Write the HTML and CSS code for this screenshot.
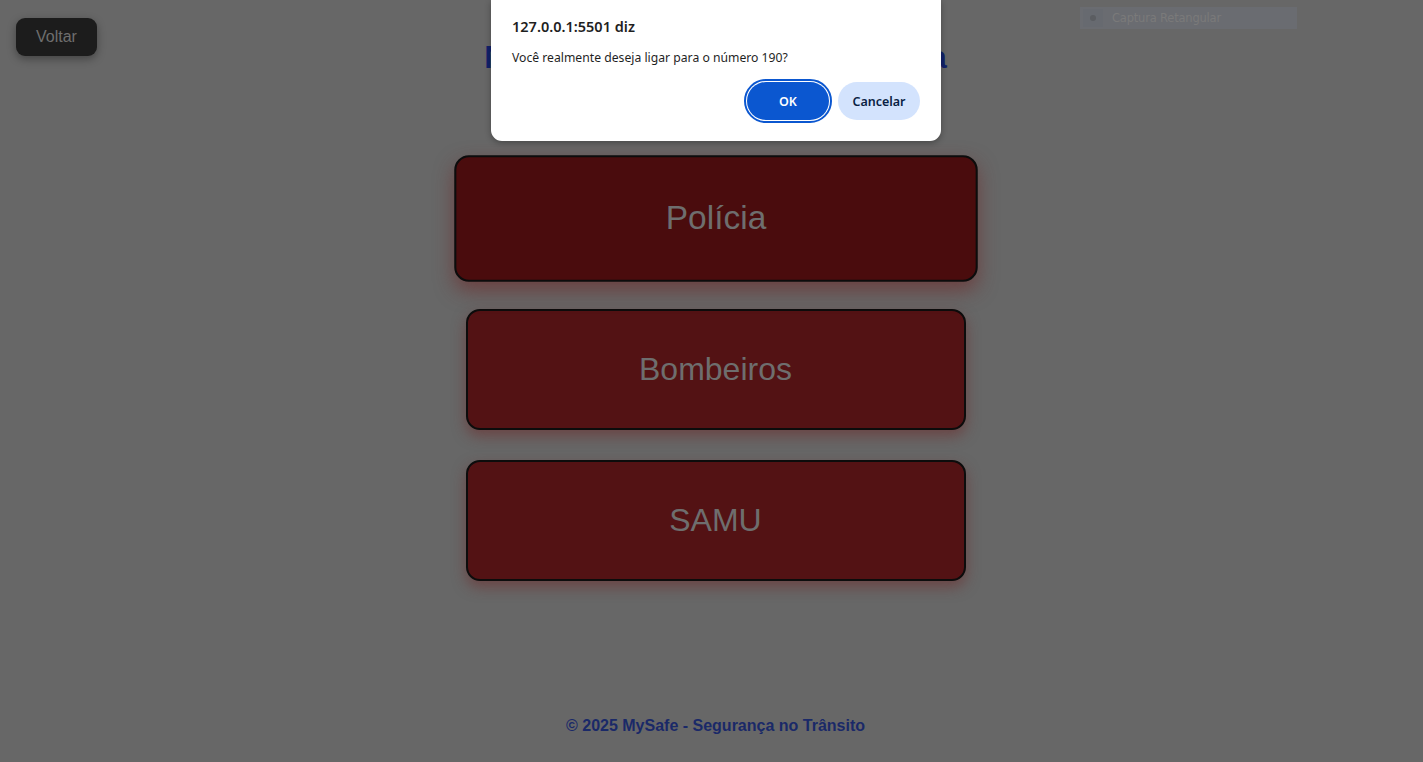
FILE: index.html
```html
<!DOCTYPE html>
<html lang="pt-BR">
<head>
<meta charset="utf-8">
<title>MySafe - Emergência</title>
<link rel="stylesheet" href="styles.css">
</head>
<body>
<div class="page">
  <button class="back-btn">Voltar</button>
  <main class="content">
    <h1 class="title">Números Úteis de Emergência</h1>
    <div class="actions">
      <button class="call-btn is-hover">Polícia</button>
      <button class="call-btn">Bombeiros</button>
      <button class="call-btn">SAMU</button>
    </div>
  </main>
  <footer class="footer">© 2025 MySafe - Segurança no Trânsito</footer>
</div>

<div class="capture-pill">
  <span class="capture-icon"><span class="capture-dot"></span></span>
  <span class="capture-label">Captura Retangular</span>
</div>

<div class="dialog" role="alertdialog">
  <div class="dialog-title">127.0.0.1:5501 diz</div>
  <div class="dialog-msg">Você realmente deseja ligar para o número 190?</div>
  <div class="dialog-actions">
    <button class="dlg-btn dlg-ok">OK</button>
    <button class="dlg-btn dlg-cancel">Cancelar</button>
  </div>
</div>
</body>
</html>
```

FILE: styles.css
```css
* { box-sizing: border-box; }

html, body {
  margin: 0;
  padding: 0;
}

body {
  background: #676767;
  font-family: "Liberation Sans", Arial, sans-serif;
  overflow: hidden;
}

.page {
  position: relative;
  height: 762px;
  display: flex;
  flex-direction: column;
  padding-left: 8px;
}

.back-btn {
  position: absolute;
  left: 16px;
  top: 18px;
  width: 81px;
  height: 38px;
  padding: 0;
  border: none;
  border-radius: 9px;
  background: #1c1c1c;
  color: #6e6e6e;
  font-family: "Liberation Sans", Arial, sans-serif;
  font-size: 16px;
  box-shadow: 0 3px 8px rgba(0, 0, 0, 0.35);
}

.content {
  display: flex;
  flex-direction: column;
  align-items: center;
  padding-top: 39px;
}

.title {
  margin: 0;
  font-size: 32px;
  line-height: 37px;
  font-weight: bold;
  color: #12216a;
}

.actions {
  margin-top: 82px;
  display: flex;
  flex-direction: column;
  align-items: center;
  gap: 30px;
}

.call-btn {
  width: 500px;
  height: 121px;
  border: 2px solid #0c0c0c;
  border-radius: 14px;
  background: #531214;
  color: #6e6e6e;
  font-family: "Liberation Sans", Arial, sans-serif;
  font-size: 32px;
  box-shadow: 0 6px 14px rgba(110, 40, 40, 0.55);
}

.call-btn.is-hover {
  background: #4a0c0d;
  transform: scale(1.047);
  box-shadow: 0 8px 18px rgba(110, 40, 40, 0.6);
}

.footer {
  margin-top: auto;
  padding-bottom: 27px;
  text-align: center;
  font-size: 16px;
  line-height: 18px;
  font-weight: bold;
  color: #1a2968;
}

/* extension pill over the page */
.capture-pill {
  position: absolute;
  left: 1080px;
  top: 7px;
  width: 217px;
  height: 22px;
  background: #6a6c71;
  display: flex;
  align-items: center;
  gap: 9px;
  padding-left: 3px;
}

.capture-icon {
  width: 20px;
  height: 18px;
  display: flex;
  align-items: center;
  justify-content: center;
  background: #676a70;
}

.capture-dot {
  width: 6px;
  height: 6px;
  border-radius: 50%;
  background: #5b5d61;
}

.capture-label {
  font-family: "DejaVu Sans", sans-serif;
  font-size: 11.5px;
  color: #7a7a7a;
  letter-spacing: -0.2px;
}

/* browser alert dialog */
.dialog {
  position: absolute;
  left: 491px;
  top: 0;
  width: 450px;
  height: 141px;
  background: #ffffff;
  border-radius: 0 0 11px 11px;
  box-shadow: 0 2px 6px rgba(0, 0, 0, 0.3);
  padding: 16px 21px 0 21px;
  font-family: "Noto Sans", "Open Sans", sans-serif;
  color: #1f1f1f;
}

.dialog-title {
  font-size: 14.5px;
  font-weight: 600;
  line-height: 20px;
}

.dialog-msg {
  margin-top: 13px;
  font-size: 12.2px;
  line-height: 18px;
}

.dialog-actions {
  margin-top: 15px;
  display: flex;
  justify-content: flex-end;
  gap: 9px;
}

.dlg-btn {
  height: 38px;
  border: none;
  border-radius: 19px;
  font-family: "Noto Sans", "Open Sans", sans-serif;
  font-size: 12.5px;
  font-weight: 600;
}

.dlg-ok {
  width: 82px;
  background: #0b57d0;
  color: #ffffff;
  outline: 2px solid #0b57d0;
  outline-offset: 1px;
}

.dlg-cancel {
  width: 82px;
  background: #d3e3fd;
  color: #0a1f44;
}
```
